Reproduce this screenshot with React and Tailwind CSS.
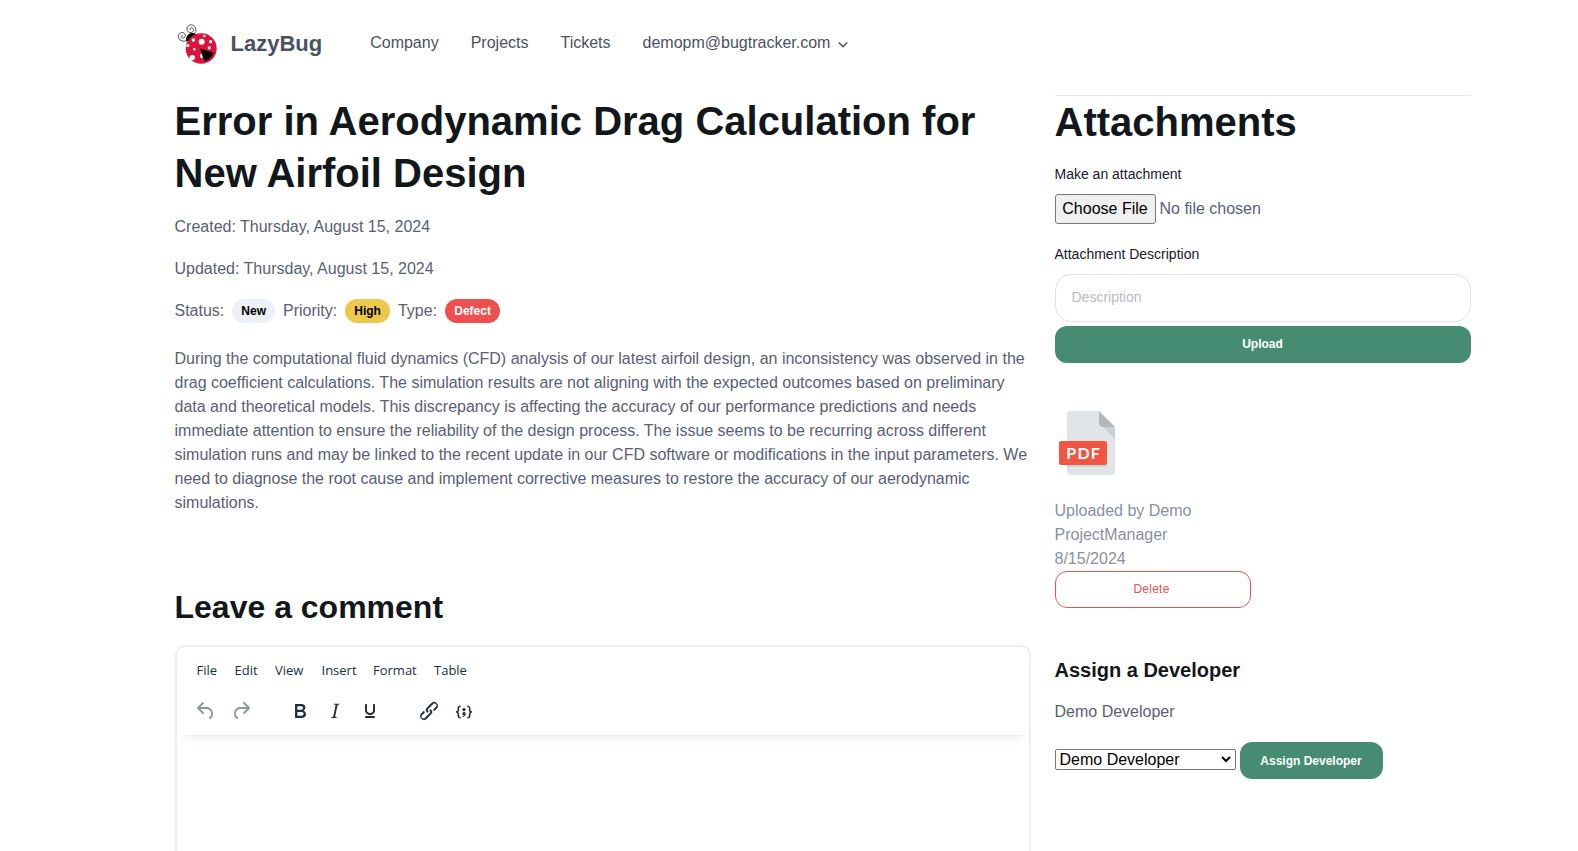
import React from "react";

const ICONS = {
  undo: "M6.4 8H12c3.7 0 6.2 2 6.8 5.1.6 2.7-.4 5.6-2.3 6.8a1 1 0 0 1-1-1.8c1.1-.6 1.8-2.7 1.4-4.6-.5-2.1-2.1-3.5-4.9-3.5H6.4l3.3 3.3a1 1 0 1 1-1.4 1.4l-5-5a1 1 0 0 1 0-1.4l5-5a1 1 0 0 1 1.4 1.4L6.4 8Z",
  redo: "M17.6 10H12c-2.8 0-4.4 1.4-4.9 3.5-.4 2 .3 4 1.4 4.6a1 1 0 1 1-1 1.8c-2-1.2-2.9-4.1-2.3-6.8.6-3 3-5.1 6.8-5.1h5.6l-3.3-3.3a1 1 0 1 1 1.4-1.4l5 5a1 1 0 0 1 0 1.4l-5 5a1 1 0 0 1-1.4-1.4l3.3-3.3Z",
  bold: "M7.8 19c-.3 0-.5 0-.6-.2l-.2-.5V5.7c0-.2 0-.4.2-.5l.6-.2h5c1.5 0 2.7.3 3.5 1 .7.6 1.1 1.4 1.1 2.5a3 3 0 0 1-.6 1.9c-.4.6-1 1-1.6 1.2.4.1.9.3 1.3.6s.8.7 1 1.2c.4.4.5 1 .5 1.6 0 1.3-.4 2.3-1.3 3-.8.7-2.1 1-3.8 1H7.8Zm5-8.3c.6 0 1.2-.1 1.6-.5.4-.3.6-.7.6-1.3 0-1.1-.8-1.7-2.3-1.7H9.3v3.5h3.4Zm.5 6c.7 0 1.3-.1 1.7-.4.4-.4.6-.9.6-1.5s-.2-1-.7-1.4c-.4-.3-1-.4-2-.4H9.4v3.8h4Z",
  italic: "m16.7 4.7-.1.9h-.3c-.6 0-1 0-1.4.3-.3.3-.4.6-.5 1.1l-2.1 9.8v.6c0 .5.4.8 1.4.8h.2l-.2.8H8l.2-.8h.2c1.1 0 1.8-.5 2-1.5l2-9.8.1-.5c0-.6-.4-.8-1.4-.8h-.3l.2-.9h5.8Z",
  underline: "M16 5c.6 0 1 .4 1 1v5.5a4 4 0 0 1-.4 1.8l-1 1.4a5.3 5.3 0 0 1-5.5 1 5 5 0 0 1-1.6-1c-.5-.4-.8-.9-1.1-1.4a4 4 0 0 1-.4-1.8V6c0-.6.4-1 1-1s1 .4 1 1v5.5c0 .3 0 .6.2 1l.6.7a3.3 3.3 0 0 0 2.2.8 3.4 3.4 0 0 0 2.2-.8c.3-.2.4-.5.6-.8l.2-.9V6c0-.6.4-1 1-1ZM8 17h8c.6 0 1 .4 1 1s-.4 1-1 1H8a1 1 0 0 1 0-2Z",
  link: "M6.2 12.3a1 1 0 0 1 1.4 1.4l-2 2a2 2 0 1 0 2.6 2.8l4.8-4.8a1 1 0 0 0 0-1.4 1 1 0 1 1 1.4-1.3 2.9 2.9 0 0 1 0 4L9.6 20a3.9 3.9 0 0 1-5.5-5.5l2-2Zm11.6-.6a1 1 0 0 1-1.4-1.4l2-2a2 2 0 1 0-2.6-2.8L11 10.3a1 1 0 0 0 0 1.4A1 1 0 1 1 9.6 13a2.9 2.9 0 0 1 0-4L14.4 4a3.9 3.9 0 0 1 5.5 5.5l-2 2Z",
  code: "M7.1 11a2.8 2.8 0 0 1-.8 2 2.8 2.8 0 0 1 .8 2v1.7c0 .3.1.6.4.8.2.3.5.4.8.4.3 0 .4.2.4.4v.8c0 .2-.1.4-.4.4-.7 0-1.4-.3-2-.8-.5-.6-.8-1.3-.8-2V15c0-.3-.1-.6-.4-.8-.2-.3-.5-.4-.8-.4a.4.4 0 0 1-.4-.4v-.8c0-.2.2-.4.4-.4.3 0 .6-.1.8-.4.3-.2.4-.5.4-.8V9.3c0-.7.3-1.4.8-2 .6-.5 1.3-.8 2-.8.3 0 .4.2.4.4v.8c0 .2-.1.4-.4.4-.3 0-.6.1-.8.4-.3.2-.4.5-.4.8V11Zm9.8 0V9.3c0-.3-.1-.6-.4-.8-.2-.3-.5-.4-.8-.4a.4.4 0 0 1-.4-.4V7c0-.2.1-.4.4-.4.7 0 1.4.3 2 .8.5.6.8 1.3.8 2V11c0 .3.1.6.4.8.2.3.5.4.8.4.2 0 .4.2.4.4v.8c0 .2-.2.4-.4.4-.3 0-.6.1-.8.4-.3.2-.4.5-.4.8v1.7c0 .7-.3 1.4-.8 2-.6.5-1.3.8-2 .8a.4.4 0 0 1-.4-.4v-.8c0-.2.1-.4.4-.4.3 0 .6-.1.8-.4.3-.2.4-.5.4-.8V15a2.8 2.8 0 0 1 .8-2 2.8 2.8 0 0 1-.8-2Zm-3.3-.4c0 .4-.1.8-.5 1.1-.3.3-.7.5-1.1.5-.4 0-.8-.2-1.1-.5-.4-.3-.5-.7-.5-1.1 0-.5.1-.9.5-1.2.3-.3.7-.4 1.1-.4.4 0 .8.1 1.1.4.4.3.5.7.5 1.2ZM12 13c.4 0 .8.1 1.1.5.4.3.5.7.5 1.1 0 1-.1 1.6-.5 2a3 3 0 0 1-1.1 1c-.4.3-.8.4-1.1.4a.5.5 0 0 1-.5-.5V17a3 3 0 0 0 1-.2l.6-.6c-.6 0-1-.2-1.3-.5-.2-.3-.3-.7-.3-1 0-.5.1-1 .5-1.2.3-.4.7-.5 1.1-.5Z",
};

const ToolIcon = ({ name, className = "text-[#222f3e]" }) => (
  <button className={`flex h-6 w-6 items-center justify-center ${className}`}>
    <svg width="24" height="24" viewBox="0 0 24 24" fill="currentColor" fillRule="evenodd">
      <path d={ICONS[name]} />
    </svg>
  </button>
);

const Ladybug = () => (
  <svg width="40" height="42" viewBox="0 0 40 42">
    <g fill="none" stroke="#333" strokeWidth="0.85">
      <path d="M15.500 12c3.500-1.200 4.500-5.500 2.300-8.300C15.500.8 10.800 1.500 10 5c-.6 3.200 2.500 5.500 5 4.300 2.200-1.200 1.800-4.300-.4-4.600-1.600-.1-2.300 1.800-1 2.600" />
      <path d="M11 16.500c-2 2-5.500 2.300-8 .3C.5 14.600.9 10.800 3.800 9.700c2.700-.9 5 1.300 4.500 3.600-.5 2-3.300 2.300-3.900.6-.3-1.100.8-1.900 1.700-1.300" />
    </g>
    <path d="M9.300 18.500c-1.300-4.500 2-9 6.500-8.500 1.800.2 3.200 1 4 2l-4 5z" fill="#000" />
    <ellipse cx="24.200" cy="25.500" rx="15.500" ry="15.200" fill="#dc143c" />
    <path d="M23 25.500l13.500 4c-1.200 4.500-4.500 7.800-9 8.800z" fill="#000" />
    <g fill="#fff">
      <circle cx="24.600" cy="18.800" r="3" />
      <circle cx="33.600" cy="18.700" r="1.600" />
      <circle cx="16.400" cy="17" r="1.800" />
      <circle cx="27.300" cy="13" r="1.200" />
      <circle cx="10.900" cy="22.600" r="1.700" />
      <circle cx="17.300" cy="26.300" r="1.200" />
      <circle cx="15.300" cy="34.600" r="2.700" />
      <circle cx="32.300" cy="24.800" r="1.600" />
      <path d="M24.300 30.500l1.600 4.500c-1.700.6-2.900-.6-2.900-2.200 0-1 .5-2 1.300-2.300z" />
    </g>
  </svg>
);

const PdfIcon = () => (
  <svg width="64" height="64" viewBox="0 0 64 64">
    <path d="M16 0h28l16 16v44a4 4 0 0 1-4 4H16a4 4 0 0 1-4-4V4a4 4 0 0 1 4-4z" fill="#e2e5e7" />
    <path d="M48 16h12L44 0v12a4 4 0 0 0 4 4z" fill="#b0b7bd" />
    <path d="M60 28 48 16h12z" fill="#cad1d8" />
    <path d="M50 54a2 2 0 0 0 2-2v2a2 2 0 0 1-2 2H12v-2z" fill="#cad1d8" />
    <rect x="4" y="30" width="48" height="24" rx="2" fill="#f15642" />
    <text x="11.300" y="48" textLength="33.500" fontFamily="Lato" fontWeight="700" fontSize="16" fill="#fff">
      PDF
    </text>
  </svg>
);

const Badge = ({ className, children }) => (
  <span className={`flex h-6 items-center justify-center rounded-full text-xs font-bold ${className}`}>{children}</span>
);

const NAV = ["Company", "Projects", "Tickets"];
const MENUS = [
  ["File", "w-[38px]"],
  ["Edit", "w-[40.500px]"],
  ["View", "w-[46.500px]"],
  ["Insert", "w-[51.500px]"],
  ["Format", "w-[61px]"],
  ["Table", "w-[40px]"],
];

export default function App() {
  return (
    <div className="h-[851px] overflow-hidden bg-white pl-[174.5px] font-['Liberation_Sans',Arial,sans-serif] text-base text-[#596075]">
      <header className="flex h-[95px] items-start pt-[22px] text-[#4a5262]">
        <a className="flex h-11 items-center">
          <span className="ml-[2.5px]">
            <Ladybug />
          </span>
          <span className="ml-[13.5px] text-[22px] leading-[42px] font-bold">LazyBug</span>
        </a>
        <nav className="mt-px ml-12 flex h-10 items-center gap-8">
          {NAV.map((n) => (
            <a key={n}>{n}</a>
          ))}
          <a className="flex items-center">
            demopm@bugtracker.com
            <svg className="mt-[3px] ml-2" width="10" height="8" viewBox="0 0 10 8" fill="none" stroke="currentColor" strokeWidth="1.500">
              <path d="M.8 1.500 5 5.800l4.200-4.300" />
            </svg>
          </a>
        </nav>
      </header>

      <main className="flex gap-6">
        <section className="w-[856px] shrink-0">
          <h1 className="text-[40px] leading-[52px] font-bold text-[#12171b]">Error in Aerodynamic Drag Calculation for New Airfoil Design</h1>
          <p className="mt-4 leading-6">Created: Thursday, August 15, 2024</p>
          <p className="mt-[18px] leading-6">Updated: Thursday, August 15, 2024</p>
          <div className="mt-[18px] flex items-center gap-2 leading-6">
            <span>Status:</span>
            <Badge className="w-[42.7px] bg-[#edf0f6] text-black">New</Badge>
            <span>Priority:</span>
            <Badge className="w-[44.7px] bg-[#ecc94b] text-black">High</Badge>
            <span>Type:</span>
            <Badge className="w-[55px] bg-[#ee5050] text-white">Defect</Badge>
          </div>
          <p className="mt-6 leading-6">
            During the computational fluid dynamics (CFD) analysis of our latest airfoil design, an inconsistency was observed in the drag coefficient calculations.
            The simulation results are not aligning with the expected outcomes based on preliminary data and theoretical models. This discrepancy is affecting the
            accuracy of our performance predictions and needs immediate attention to ensure the reliability of the design process. The issue seems to be recurring
            across different simulation runs and may be linked to the recent update in our CFD software or modifications in the input parameters. We need to diagnose
            the root cause and implement corrective measures to restore the accuracy of our aerodynamic simulations.
          </p>
          <h2 className="mt-[71px] text-[32px] leading-[42px] font-bold text-[#12171b]">Leave a comment</h2>
          <div className="mt-[17px] h-[400px] rounded-[10px] border-2 border-[#eeeeee]">
            <div className="mx-[2px] h-[88px] rounded-t-lg bg-white shadow-[0_2px_2px_-2px_rgba(34,47,62,0.1),0_8px_8px_-4px_rgba(34,47,62,0.07)]">
              <div className="flex h-[46px] items-center pt-[2px] pl-[18px] font-['Open_Sans','Noto_Sans',sans-serif] text-[13px] text-[#222f3e]">
                {MENUS.map(([m, w]) => (
                  <span key={m} className={`${w} shrink-0 whitespace-nowrap`}>
                    {m}
                  </span>
                ))}
              </div>
              <div className="flex items-center gap-[35px] pt-[6px] pl-[15.5px]">
                <div className="flex gap-[11px]">
                  <ToolIcon name="undo" className="text-[#222f3e]/50" />
                  <ToolIcon name="redo" className="text-[#222f3e]/50" />
                </div>
                <div className="flex gap-[11px]">
                  <ToolIcon name="bold" />
                  <ToolIcon name="italic" />
                  <ToolIcon name="underline" />
                </div>
                <div className="flex gap-[11px]">
                  <ToolIcon name="link" />
                  <ToolIcon name="code" />
                </div>
              </div>
            </div>
          </div>
        </section>

        <aside className="w-[416px] shrink-0">
          <hr className="border-[#e7eaf0]" />
          <h1 className="text-[40px] leading-[52px] font-bold text-[#12171b]">Attachments</h1>
          <div className="mt-4 text-sm leading-5 text-[#16192c]">Make an attachment</div>
          <div className="mt-[10px] flex items-center">
            <button className="h-[30px] w-[101px] rounded-[3px] border border-[#767676] bg-[#efefef] text-black">Choose File</button>
            <span className="ml-1">No file chosen</span>
          </div>
          <div className="mt-5 text-sm leading-5 text-[#16192c]">Attachment Description</div>
          <input
            className="mt-[10px] block h-12 w-full rounded-2xl border border-[#dee2e6] px-4 pb-[2px] text-sm placeholder:text-[#b5bcc4]"
            placeholder="Description"
          />
          <button className="mt-1 block h-[37px] w-full rounded-xl bg-[#458c73] pb-[2px] text-xs font-bold text-white">Upload</button>
          <div className="mt-12 w-[196px] text-[#8a90a0]">
            <PdfIcon />
            <div className="mt-6 leading-6">
              Uploaded by Demo
              <br />
              ProjectManager
              <br />
              8/15/2024
            </div>
            <button className="block h-[37px] w-full rounded-xl border border-[#ee5050] pr-[2px] pb-[2px] text-xs tracking-[0.02em] text-[#ee5050]">Delete</button>
          </div>
          <h4 className="mt-12 text-xl leading-[28px] font-bold text-[#12171b]">Assign a Developer</h4>
          <p className="mt-4 leading-6">Demo Developer</p>
          <div className="mt-[18px] flex items-start gap-1">
            <div className="mt-[7px] flex h-[21px] w-[181px] items-center justify-between rounded-[2px] border border-[#767676] pr-[4px] pl-1 text-black">
              <span>Demo Developer</span>
              <svg width="10" height="7" viewBox="0 0 10 7" fill="none" stroke="#000" strokeWidth="2">
                <path d="M1 1l4 4 4-4" />
              </svg>
            </div>
            <button className="h-[37px] w-[143px] rounded-xl bg-[#458c73] text-xs font-bold text-white">Assign Developer</button>
          </div>
        </aside>
      </main>
    </div>
  );
}
